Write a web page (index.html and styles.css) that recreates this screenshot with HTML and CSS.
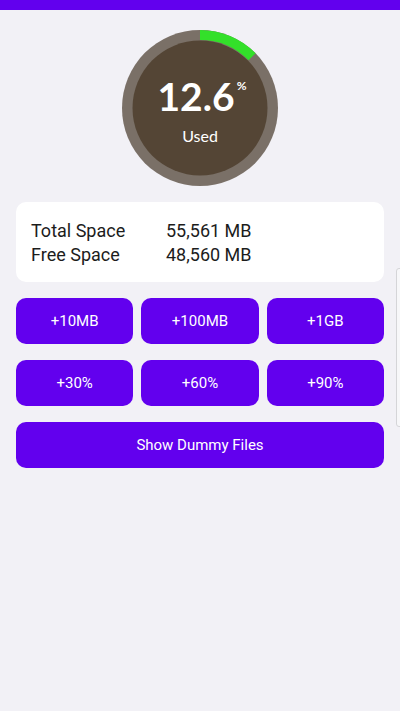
FILE: index.html
```html
<!DOCTYPE html>
<html lang="en">
<head>
  <meta charset="UTF-8" />
  <meta name="viewport" content="width=device-width, initial-scale=1" />
  <title>Storage Filler</title>
  <link rel="stylesheet" href="styles.css">
</head>
<body>
<div class="topbar"></div>
<main>
  <div class="gauge">
    <svg class="ring" width="156" height="156" viewBox="0 0 156 156">
      <circle cx="78" cy="78" r="78" fill="#7a7067" />
      <path d="M78 0 A78 78 0 0 1 133.6 23.3 L126.5 30.3 A68 68 0 0 0 78 10 Z" fill="#33e02a" />
      <circle cx="78" cy="78" r="67.5" fill="#544535" />
    </svg>
    <div class="gauge-text">
      <div class="percent">12.6<span class="sign">%</span></div>
      <div class="used">Used</div>
    </div>
  </div>

  <div class="card">
    <div class="row"><span class="label">Total Space</span><span>55,561 MB</span></div>
    <div class="row"><span class="label">Free Space</span><span>48,560 MB</span></div>
  </div>

  <div class="grid">
    <button>+10MB</button>
    <button>+100MB</button>
    <button>+1GB</button>
    <button>+30%</button>
    <button>+60%</button>
    <button>+90%</button>
  </div>
  <button class="wide">Show Dummy Files</button>
</main>
<div class="edge"></div>
</body>
</html>
```

FILE: styles.css
```css
body {
  margin: 0;
  background: #f2f1f6;
  font-family: Roboto, "Noto Sans", sans-serif;
  color: #1c1c1c;
  min-height: 711px;
  position: relative;
  overflow: hidden;
}
.topbar {
  height: 10px;
  background: #6200ee;
}
main {
  padding: 20px 16px 0;
  display: flex;
  flex-direction: column;
}
.gauge {
  position: relative;
  width: 156px;
  height: 156px;
  margin: 0 auto;
}
.ring {
  display: block;
}
.gauge-text {
  position: absolute;
  inset: 0;
  display: flex;
  flex-direction: column;
  align-items: center;
  color: #fff;
  font-family: Lato, sans-serif;
}
.percent {
  margin-top: 43px;
  margin-right: 8px;
  font-size: 39px;
  font-weight: 700;
  line-height: 46px;
  position: relative;
}
.sign {
  position: absolute;
  top: 5px;
  right: -12px;
  font-size: 12px;
  line-height: 16px;
  font-weight: 700;
}
.used {
  margin-top: 7px;
  font-size: 16px;
  line-height: 20px;
}
.card {
  margin-top: 16px;
  background: #fff;
  border-radius: 10px;
  padding: 17px 15px 15px;
  font-size: 18px;
  line-height: 24px;
}
.row {
  display: flex;
}
.label {
  width: 135px;
}
.grid {
  margin-top: 16px;
  display: grid;
  grid-template-columns: repeat(3, 1fr);
  column-gap: 8px;
  row-gap: 16px;
}
button {
  height: 46px;
  border: none;
  border-radius: 10px;
  background: #6200ee;
  color: #fff;
  font-family: Roboto, sans-serif;
  font-size: 15px;
  cursor: pointer;
}
.wide {
  margin-top: 16px;
}
.edge {
  position: absolute;
  right: -4px;
  top: 268px;
  width: 6px;
  height: 157px;
  border: 1px solid #d5d5d8;
  border-radius: 3px;
  background: #f7f7f9;
}
```
